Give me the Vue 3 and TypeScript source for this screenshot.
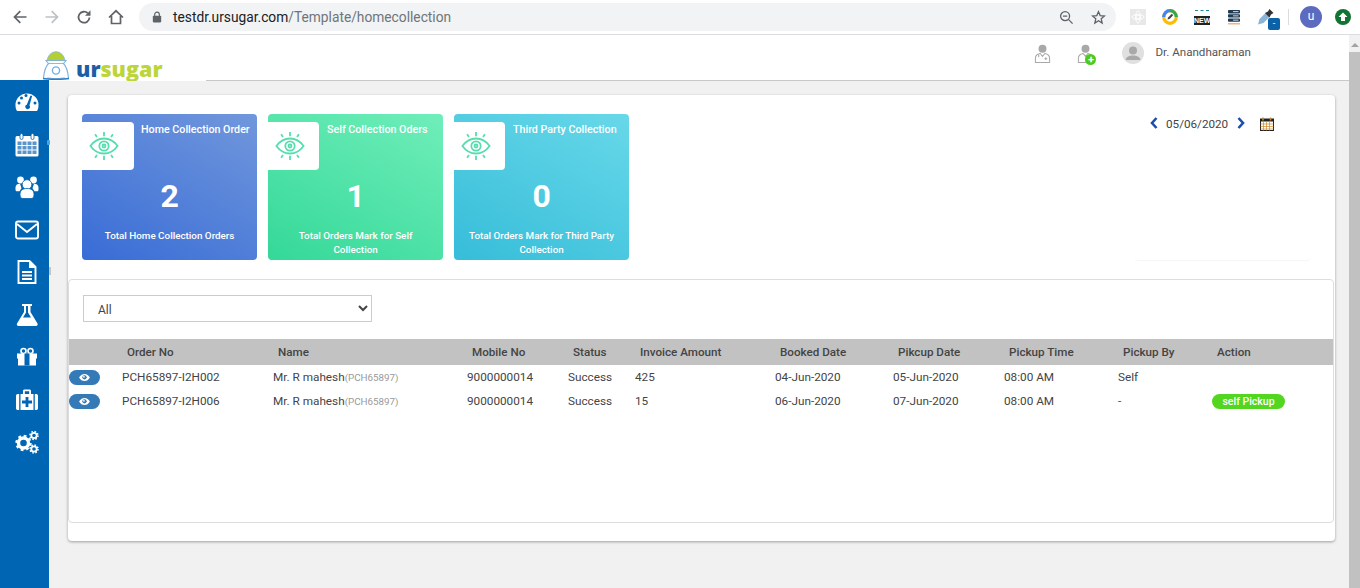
<template>
  <div class="page">
    <!-- browser chrome -->
    <div class="chrome">
      <div class="nav-btns">
        <svg viewBox="0 0 16 16" class="nav"><path d="M14.500 8H3M8.300 2.200 2.500 8l5.800 5.800" fill="none" stroke="#5f6368" stroke-width="1.700" /></svg>
        <svg viewBox="0 0 16 16" class="nav"><path d="M1.500 8H13M7.700 2.200 13.500 8l-5.800 5.800" fill="none" stroke="#bdc1c6" stroke-width="1.700" /></svg>
        <svg viewBox="0 0 16 16" class="nav"><path d="M13.500 8.500A5.500 5.500 0 1 1 11.800 4.200" fill="none" stroke="#5f6368" stroke-width="1.800" /><path d="M14.500 1.200V6.800H9z" fill="#5f6368" /></svg>
        <svg viewBox="0 0 16 16" class="nav"><path d="M1 8.500 8 1.800l7 6.700M3.500 7v7.500h9V7" fill="none" stroke="#5f6368" stroke-width="1.700" /></svg>
      </div>
      <div class="omnibox">
        <svg viewBox="0 0 12 14" class="lock"><rect x="1" y="5.500" width="10" height="8" rx="1" fill="#5f6368" /><path d="M3.200 6V4a2.800 2.800 0 0 1 5.600 0v2" fill="none" stroke="#5f6368" stroke-width="1.400" /></svg>
        <span class="url"><span class="host">testdr.ursugar.com</span>/Template/homecollection</span>
        <svg viewBox="0 0 16 16" class="omni-ico zoom-ico"><circle cx="6.500" cy="6.500" r="4.800" fill="none" stroke="#5f6368" stroke-width="1.400" /><path d="M4.200 6.500h4.600M10 10l4.500 4.500" stroke="#5f6368" stroke-width="1.400" /></svg>
        <svg viewBox="0 0 16 16" class="omni-ico"><path d="M8 1.800 9.800 6l4.600.4-3.500 3 1 4.500L8 11.500l-3.900 2.400 1-4.500-3.500-3L6.200 6z" fill="none" stroke="#5f6368" stroke-width="1.400" /></svg>
      </div>
      <div class="exts">
        <svg viewBox="0 0 16 16" class="ext"><rect width="16" height="16" fill="#e8e8e8" /><g fill="none" stroke="#fff"><circle cx="8" cy="8" r="2" /><ellipse cx="8" cy="8" rx="6" ry="2.400" /><ellipse cx="8" cy="8" rx="2.400" ry="6" /></g></svg>
        <svg viewBox="0 0 16 16" class="ext"><circle cx="8" cy="8" r="6.300" fill="#fff" stroke="#fbbc04" stroke-width="3.200" /><path d="M8 1.700A6.300 6.300 0 0 0 1.700 8" fill="none" stroke="#4285f4" stroke-width="3.200" /><path d="M14.300 8A6.300 6.300 0 0 0 8 1.700" fill="none" stroke="#34a853" stroke-width="3.200" /><path d="m5.500 10.500.6-2L9.800 4.800l1.400 1.400-3.700 3.700z" fill="#444" /></svg>
        <div class="ext new-ext"><span class="new-dash"></span><span class="new-word">NEW</span></div>
        <svg viewBox="0 0 16 16" class="ext"><g fill="#1f3a54"><rect x="2" y="1" width="12" height="3.400" rx=".8" /><rect x="2" y="5.200" width="12" height="3.400" rx=".8" /><rect x="2" y="9.400" width="12" height="3.400" rx=".8" /></g><g fill="#fff"><rect x="7" y="2.300" width="5.500" height=".8" /><rect x="7" y="6.500" width="5.500" height=".8" /><rect x="7" y="10.700" width="5.500" height=".8" /></g><rect x="2" y="14.200" width="12" height="1.200" fill="#f0a060" /></svg>
        <div class="ext dropper">
          <svg viewBox="0 0 16 16" class="ext"><path d="M0 15.500 1.500 10 8 3.500l4 4-6.500 6.500z" fill="#8ab4d8" /><path d="m7 4 3-1.500L11.500 0l4 4L13 5.500 11.500 8.500z" fill="#333" /></svg>
          <span class="dropper-badge">-</span>
        </div>
        <span class="ext-sep"></span>
        <span class="profile">u</span>
        <svg viewBox="0 0 16 16" class="ext update"><circle cx="8" cy="8" r="8" fill="#137333" /><path d="M8 3.500 12.500 8H10v4H6V8H3.500z" fill="#fff" /></svg>
      </div>
    </div>

    <div class="viewport">
      <div class="app-col">
        <header class="header">
          <div class="logo">
            <svg viewBox="0 0 28 29" class="sack">
              <path d="M5 9.500C6 4 10 .8 14 .8s8 3.200 9 8.700z" fill="#b5cf32" stroke="#7fb2dd" stroke-width=".8" />
              <path d="M4 9.500h20l-2.500 3c3 3 4.500 9 5 14.500-2 .8-4 .5-5 0-5 1-10 1-15 0-1 .5-3 .8-5 0 .5-5.500 2-11.500 5-14.500z" fill="#fff" stroke="#7fb2dd" stroke-width="1.100" />
              <path d="M6.500 12.500h15" stroke="#7fb2dd" stroke-width=".9" />
              <circle cx="14" cy="19.500" r="3.600" fill="none" stroke="#6fb0e6" stroke-width="1.400" />
              <path d="M1 27.500c4 1 22 1 26 0" fill="none" stroke="#2f7fc4" stroke-width="1.300" />
            </svg>
            <span class="wordmark"><span class="ur">ur</span><span class="sugar">sugar</span></span>
          </div>
          <div class="user-area">
            <svg viewBox="0 0 18 20" class="doc-ico">
              <circle cx="9" cy="5" r="4.200" fill="#a8a8a8" />
              <path d="M1.500 19.500v-4.500c0-3 2.500-4.500 5-5l2.500 3 2.500-3c2.500.5 5 2 5 5v4.500z" fill="#fff" stroke="#a8a8a8" stroke-width="1.100" />
              <path d="M12.500 14v3M11 15.500h3M5 11v3" stroke="#a8a8a8" stroke-width="1.100" />
            </svg>
            <div class="doc-add">
              <svg viewBox="0 0 18 20" class="doc-ico">
                <circle cx="9" cy="5" r="4.200" fill="#a8a8a8" />
                <path d="M1.500 19.500v-4.500c0-3 2.500-4.500 5-5l2.500 3 2.500-3c2.500.5 5 2 5 5v4.500z" fill="#fff" stroke="#a8a8a8" stroke-width="1.100" />
              </svg>
              <span class="plus-badge">+</span>
            </div>
            <svg viewBox="0 0 22 22" class="avatar">
              <circle cx="11" cy="11" r="11" fill="#e0e0e0" />
              <circle cx="11" cy="8.500" r="4" fill="#a9a9a9" />
              <path d="M3.500 18c1-3.500 4-4.500 7.500-4.500s6.500 1 7.500 4.500z" fill="#a9a9a9" />
            </svg>
            <span class="user-name">Dr. Anandharaman</span>
          </div>
        </header>

        <div class="body">
          <nav class="sidebar">
            <svg viewBox="0 0 24 24" class="side-ico">
              <path d="M.5 15a11.500 11.500 0 1 1 23 0c0 3-.5 4.500-1.500 6H2c-1-1.500-1.500-3-1.500-6z" fill="#fff" />
              <g fill="#0065b3"><circle cx="4" cy="13" r="1.500" /><circle cx="6.500" cy="8" r="1.500" /><circle cx="11" cy="5.500" r="1.500" /><circle cx="20" cy="13" r="1.500" /><path d="m15.500 5.500 1.600.6-2.600 9.400a2.300 2.300 0 1 1-2.700-.8z" /></g>
            </svg>
            <svg viewBox="0 0 24 24" class="side-ico">
              <path d="M2 3h20a1.500 1.500 0 0 1 1.500 1.500V22a1.500 1.500 0 0 1-1.500 1.500H2A1.500 1.500 0 0 1 .5 22V4.500A1.500 1.500 0 0 1 2 3z" fill="#fff" />
              <g fill="#fff" stroke="#0065b3" stroke-width=".8"><rect x="5" y=".5" width="3" height="6" rx="1.500" /><rect x="16" y=".5" width="3" height="6" rx="1.500" /></g>
              <g fill="#5a94c9"><rect x="2.500" y="8.500" width="4" height="3.500" /><rect x="7.500" y="8.500" width="4" height="3.500" /><rect x="12.500" y="8.500" width="4" height="3.500" /><rect x="17.500" y="8.500" width="4" height="3.500" /><rect x="2.500" y="13" width="4" height="3.500" /><rect x="7.500" y="13" width="4" height="3.500" /><rect x="12.500" y="13" width="4" height="3.500" /><rect x="17.500" y="13" width="4" height="3.500" /><rect x="2.500" y="17.500" width="4" height="3.500" /><rect x="7.500" y="17.500" width="4" height="3.500" /><rect x="12.500" y="17.500" width="4" height="3.500" /><rect x="17.500" y="17.500" width="4" height="3.500" /></g>
            </svg>
            <svg viewBox="0 0 24 24" class="side-ico">
              <g fill="#fff">
                <circle cx="5.500" cy="5" r="3.400" />
                <circle cx="18.500" cy="5" r="3.400" />
                <path d="M.5 12.500C.5 10 2.500 8.500 5 8.700l1.500 4.500-2 3H2c-1 0-1.500-.7-1.500-1.500zM23.500 12.500c0-2.500-2-4-4.500-3.800l-1.500 4.500 2 3H22c1 0 1.500-.7 1.500-1.500z" />
                <circle cx="12" cy="9.500" r="4.800" stroke="#0065b3" stroke-width=".8" />
                <path d="M5 19.500c0-4.500 3-6 7-6s7 1.500 7 6c0 2.500-1 4-3 4H8c-2 0-3-1.500-3-4z" stroke="#0065b3" stroke-width=".8" />
              </g>
            </svg>
            <svg viewBox="0 0 24 24" class="side-ico">
              <rect x="1" y="3.500" width="22" height="17" rx="2" fill="none" stroke="#fff" stroke-width="1.900" />
              <path d="m2 6 10 8 10-8" fill="none" stroke="#fff" stroke-width="1.900" />
            </svg>
            <svg viewBox="0 0 24 24" class="side-ico">
              <path d="M3.500 1h11l6 6v16h-17z" fill="none" stroke="#fff" stroke-width="1.900" />
              <path d="M14 1v7h7z" fill="#fff" />
              <path d="M7 12h10M7 15.500h10M7 19h10" stroke="#fff" stroke-width="1.800" />
            </svg>
            <svg viewBox="0 0 24 24" class="side-ico">
              <path d="M7 1h10v2h-1.500v6l7 11.500c.6 1.300-.2 2.500-1.500 2.500H3.500c-1.300 0-2.100-1.200-1.500-2.500L9 9V3H7z" fill="#fff" />
              <path d="M11 3v6.500L8 14.500h8l-3-5V3z" fill="#0065b3" />
            </svg>
            <svg viewBox="0 0 24 24" class="side-ico">
              <g fill="none" stroke="#fff" stroke-width="1.600"><circle cx="8.500" cy="6" r="2.500" /><circle cx="15.500" cy="6" r="2.500" /></g>
              <path d="M2 8.500h20v5h-1v7H3v-7H2z" fill="#fff" />
              <rect x="9.500" y="8.500" width="5" height="12" fill="#0065b3" />
            </svg>
            <svg viewBox="0 0 24 24" class="side-ico">
              <path d="M8 6V3c0-1 .7-1.500 1.500-1.500h5c.8 0 1.500.5 1.500 1.500v3h-1.800V3.300H9.800V6z" fill="#fff" />
              <path d="M2.500 6h1.700v16H2.500C1.500 22 1 21 1 20V8c0-1 .5-2 1.500-2zM21.500 6h-1.700v16h1.700c1 0 1.500-1 1.500-2V8c0-1-.5-2-1.500-2z" fill="#fff" />
              <rect x="5.500" y="6" width="13" height="16" fill="#fff" />
              <path d="M12 9v10M7 14h10" stroke="#0065b3" stroke-width="2.800" />
            </svg>
            <svg viewBox="0 0 24 24" class="side-ico">
              <g fill="none" stroke="#fff">
                <circle cx="8.500" cy="13" r="5" stroke-width="3.400" />
                <circle cx="8.500" cy="13" r="7" stroke-width="2.400" stroke-dasharray="2.700 2.800" />
                <circle cx="19" cy="5.500" r="2.700" stroke-width="1.800" />
                <circle cx="19" cy="5.500" r="4" stroke-width="1.500" stroke-dasharray="1.600 1.540" />
                <circle cx="19" cy="19" r="2.700" stroke-width="1.800" />
                <circle cx="19" cy="19" r="4" stroke-width="1.500" stroke-dasharray="1.600 1.540" />
              </g>
            </svg>
            <span class="side-dot"></span>
            <span class="side-peek"></span>
          </nav>

          <main class="main">
            <section class="panel">
              <div class="top-row">
                <div class="cards">
                  <div v-for="card in cards" :key="card.title" class="card" :class="card.tone">
                    <div class="card-head">
                      <div class="card-icon">
                        <svg viewBox="0 0 32 32" class="eye">
                          <g fill="none" stroke="#55deac" stroke-width="1.900">
                            <path d="M1.500 16c4-5.500 8.500-8 14.500-8s10.500 2.500 14.500 8c-4 5.500-8.500 8-14.500 8S5.500 21.500 1.500 16z" />
                            <circle cx="16" cy="16" r="5" />
                            <circle cx="16" cy="16" r="1.600" />
                            <path d="M16 1v4.500M16 26.500V31M6.500 3.500l2 3M25.500 3.500l-2 3M6.500 28.500l2-3M25.500 28.500l-2-3" />
                          </g>
                        </svg>
                      </div>
                      <span class="card-title">{{ card.title }}</span>
                    </div>
                    <div class="card-count">{{ card.count }}</div>
                    <div class="card-note">{{ card.note }}</div>
                  </div>
                </div>
                <div class="date-box">
                  <svg viewBox="0 0 8 12" class="chev"><path d="M6.500 1 2 6l4.500 5" fill="none" stroke="#1c4fa8" stroke-width="2.600" /></svg>
                  <span class="date-text">05/06/2020</span>
                  <svg viewBox="0 0 8 12" class="chev"><path d="M1.500 1 6 6l-4.500 5" fill="none" stroke="#1c4fa8" stroke-width="2.600" /></svg>
                  <svg viewBox="0 0 14 14" class="cal">
                    <rect x=".5" y="2" width="13" height="11.500" fill="#fff" stroke="#222" />
                    <rect x=".5" y="2" width="13" height="2.500" fill="#222" />
                    <path d="M3 .5v3M10.500 .5v3" stroke="#c98a2d" stroke-width="1.500" />
                    <path d="M.5 7h13M.5 9.500h13M.5 12h13M3.500 4.500v9M6.500 4.500v9M9.500 4.500v9" stroke="#c98a2d" stroke-width=".7" />
                  </svg>
                </div>
              </div>

              <div class="orders">
                <div class="filter">
                  <select class="status-select">
                    <option>All</option>
                  </select>
                </div>
                <table class="orders-table">
                  <colgroup>
                    <col v-for="col in columns" :key="col.label" :style="{ width: col.width + 'px' }" />
                  </colgroup>
                  <thead>
                    <tr>
                      <th v-for="col in columns" :key="col.label">{{ col.label }}</th>
                    </tr>
                  </thead>
                  <tbody>
                    <tr v-for="row in rows" :key="row.orderNo">
                      <td>
                        <span class="view-btn">
                          <svg viewBox="0 0 14 10" class="view-eye">
                            <path d="M1 5c1.500-2.500 3.500-4 6-4s4.500 1.500 6 4c-1.500 2.500-3.500 4-6 4S2.500 7.500 1 5z" fill="#fff" />
                            <circle cx="7" cy="4.800" r="2.400" fill="#337ab7" />
                            <circle cx="6.400" cy="4.200" r="1" fill="#fff" />
                          </svg>
                        </span>
                      </td>
                      <td>{{ row.orderNo }}</td>
                      <td>{{ row.name }}<span class="ref">({{ row.ref }})</span></td>
                      <td>{{ row.mobile }}</td>
                      <td>{{ row.status }}</td>
                      <td>{{ row.amount }}</td>
                      <td>{{ row.booked }}</td>
                      <td>{{ row.pickup }}</td>
                      <td>{{ row.time }}</td>
                      <td>{{ row.by }}</td>
                      <td><span v-if="row.action" class="pickup-pill">{{ row.action }}</span></td>
                    </tr>
                  </tbody>
                </table>
              </div>
            </section>
          </main>
        </div>
      </div>

      <div class="scrollbar">
        <span class="scroll-up"></span>
        <span class="scroll-thumb"></span>
      </div>
    </div>
  </div>
</template>

<script setup lang="ts">
interface Card {
  title: string
  count: number
  note: string
  tone: string
}

interface OrderRow {
  orderNo: string
  name: string
  ref: string
  mobile: string
  status: string
  amount: string
  booked: string
  pickup: string
  time: string
  by: string
  action?: string
}

const cards: Card[] = [
  { title: 'Home Collection Order', count: 2, note: 'Total Home Collection Orders', tone: 'blue' },
  { title: 'Self Collection Oders', count: 1, note: 'Total Orders Mark for Self Collection', tone: 'green' },
  { title: 'Third Party Collection', count: 0, note: 'Total Orders Mark for Third Party Collection', tone: 'cyan' }
]

const columns = [
  { label: '', width: 53 },
  { label: 'Order No', width: 151 },
  { label: 'Name', width: 194 },
  { label: 'Mobile No', width: 101 },
  { label: 'Status', width: 67 },
  { label: 'Invoice Amount', width: 140 },
  { label: 'Booked Date', width: 118 },
  { label: 'Pikcup Date', width: 111 },
  { label: 'Pickup Time', width: 114 },
  { label: 'Pickup By', width: 94 },
  { label: 'Action', width: 121 }
]

const rows: OrderRow[] = [
  {
    orderNo: 'PCH65897-I2H002',
    name: 'Mr. R mahesh',
    ref: 'PCH65897',
    mobile: '9000000014',
    status: 'Success',
    amount: '425',
    booked: '04-Jun-2020',
    pickup: '05-Jun-2020',
    time: '08:00 AM',
    by: 'Self'
  },
  {
    orderNo: 'PCH65897-I2H006',
    name: 'Mr. R mahesh',
    ref: 'PCH65897',
    mobile: '9000000014',
    status: 'Success',
    amount: '15',
    booked: '06-Jun-2020',
    pickup: '07-Jun-2020',
    time: '08:00 AM',
    by: '-',
    action: 'self Pickup'
  }
]
</script>

<style>
html,
body {
  margin: 0;
  background: #f1f1f1;
  overflow: hidden;
}
</style>

<style scoped>
.page {
  width: 1360px;
  height: 588px;
  display: flex;
  flex-direction: column;
  font-family: Roboto, "Liberation Sans", sans-serif;
  color: #444;
  overflow: hidden;
}

/* browser bar */
.chrome {
  height: 34px;
  flex: none;
  display: flex;
  align-items: center;
  background: #fff;
  border-bottom: 1px solid #dadce0;
}

.nav-btns {
  display: flex;
  gap: 16px;
  padding-left: 12px;
  width: 139px;
  box-sizing: border-box;
}

.nav {
  width: 16px;
  height: 16px;
}

.omnibox {
  width: 977px;
  height: 28px;
  display: flex;
  align-items: center;
  background: #f1f3f4;
  border-radius: 14px;
  box-sizing: border-box;
  padding: 0 10px 0 13px;
}

.lock {
  width: 10px;
  height: 12px;
}

.url {
  margin-left: 11px;
  font-size: 13.750px;
  color: #70757a;
  flex: 1;
}

.host {
  color: #202124;
}

.omni-ico {
  width: 15px;
  height: 15px;
}

.zoom-ico {
  margin-right: 17px;
}

.exts {
  display: flex;
  align-items: center;
  flex: 1;
  padding-left: 14px;
}

.ext {
  width: 16px;
  height: 16px;
  flex: none;
  margin-right: 16px;
}

.new-ext {
  display: flex;
  flex-direction: column;
  align-items: center;
  justify-content: flex-end;
  height: 16px;
}

.new-dash {
  width: 14px;
  height: 6px;
  border-top: 1px dashed #1a8a9a;
  box-sizing: border-box;
}

.new-word {
  background: #222;
  color: #fff;
  font-size: 7px;
  font-weight: 700;
  line-height: 9px;
  width: 16px;
  text-align: center;
  font-family: "Liberation Sans", sans-serif;
}

.dropper {
  position: relative;
  margin-right: 14px;
}

.dropper .ext {
  margin: 0;
  display: block;
}

.dropper-badge {
  position: absolute;
  left: 10px;
  top: 9px;
  width: 12px;
  height: 12px;
  background: #0b62a8;
  border-radius: 2px;
  color: #fff;
  font-size: 9px;
  line-height: 11px;
  text-align: center;
}

.ext-sep {
  width: 1px;
  height: 16px;
  background: #dadce0;
  margin-right: 11px;
}

.profile {
  width: 22px;
  height: 22px;
  border-radius: 50%;
  background: #5c6bc0;
  color: #fff;
  font-size: 12px;
  line-height: 21px;
  text-align: center;
  flex: none;
  margin-right: 13px;
}

.update {
  margin-right: 0;
}

.viewport {
  flex: 1;
  display: flex;
  min-height: 0;
}

.app-col {
  flex: 1;
  min-width: 0;
  display: flex;
  flex-direction: column;
}

/* site header */
.header {
  height: 45px;
  flex: none;
  display: flex;
  justify-content: space-between;
  background: #fff;
  border-bottom: 1px solid #c8c8c8;
}

.logo {
  width: 206px;
  height: 46px;
  box-sizing: border-box;
  background: #fff;
  display: flex;
  align-items: flex-start;
  padding: 16px 0 0 42px;
}

.sack {
  width: 28px;
  height: 29px;
  flex: none;
}

.wordmark {
  font-family: "Open Sans", sans-serif;
  font-weight: 800;
  font-size: 21.500px;
  line-height: 24px;
  margin-left: 6px;
  margin-top: 6px;
}

.ur {
  color: #1a5fa8;
}

.sugar {
  color: #bcd63a;
}

.user-area {
  display: flex;
  align-items: center;
  padding-right: 98px;
  height: 36px;
}

.doc-ico {
  width: 17px;
  height: 19px;
  display: block;
}

.doc-add {
  position: relative;
  margin-left: 26px;
  margin-right: 28px;
}

.plus-badge {
  position: absolute;
  left: 8px;
  top: 10px;
  width: 11px;
  height: 11px;
  border-radius: 50%;
  background: #4fc91f;
  color: #fff;
  font-size: 11px;
  font-weight: 700;
  line-height: 11px;
  text-align: center;
}

.avatar {
  width: 22px;
  height: 22px;
  flex: none;
}

.user-name {
  font-size: 11.600px;
  margin-left: 11px;
  margin-bottom: 2px;
  color: #555;
}

.body {
  flex: 1;
  display: flex;
  min-height: 0;
}

/* left rail */
.sidebar {
  width: 49px;
  flex: none;
  margin-top: -1px;
  background: #0065b3;
  display: flex;
  flex-direction: column;
  align-items: center;
  gap: 18.500px;
  padding: 10px 0 0 4px;
  box-sizing: border-box;
  position: relative;
}

.side-ico {
  width: 24px;
  height: 24px;
  flex: none;
}

.side-dot {
  position: absolute;
  left: 47px;
  top: 60px;
  width: 3px;
  height: 5px;
  background: #3fa9e8;
  border-radius: 1px;
}

.side-peek {
  position: absolute;
  left: 49px;
  top: 187px;
  width: 1.500px;
  height: 8px;
  background: #c4c4c4;
}

.main {
  flex: 1;
  min-width: 0;
  padding: 14px 14px 0 19px;
  background: #f1f1f1;
}

.panel {
  height: 446px;
  box-sizing: border-box;
  background: #fff;
  border-radius: 4px;
  box-shadow: 0 1px 3px rgba(0, 0, 0, 0.35);
  padding-top: 19px;
}

.top-row {
  display: flex;
  justify-content: space-between;
  padding: 0 25px 0 14px;
  height: 146px;
}

.cards {
  display: flex;
  gap: 10.800px;
}

.card {
  width: 175.200px;
  height: 146px;
  box-sizing: border-box;
  border-radius: 4px;
  color: #fff;
  display: flex;
  flex-direction: column;
  align-items: center;
  padding-top: 8px;
}

.card.blue {
  background: linear-gradient(30deg, #386cd6, #7197dc);
}

.card.green {
  background: linear-gradient(30deg, #34d898, #70eeba);
}

.card.cyan {
  background: linear-gradient(30deg, #36bdd9, #68d8e9);
}

.card-head {
  width: 100%;
  display: flex;
  align-items: flex-start;
}

.card-icon {
  width: 51.500px;
  height: 48px;
  background: #fff;
  border-radius: 0 4px 4px 0;
  display: flex;
  align-items: center;
  padding-left: 7px;
  box-sizing: border-box;
  flex: none;
}

.eye {
  width: 30px;
  height: 30px;
}

.card-title {
  font-size: 10.700px;
  font-weight: 500;
  line-height: 14px;
  margin: 1px 0 0 7.500px;
}

.card-count {
  font-size: 32px;
  font-weight: 700;
  line-height: 36px;
  margin-top: 8px;
}

.card-note {
  font-size: 9.850px;
  font-weight: 500;
  line-height: 14px;
  text-align: center;
  margin-top: 15px;
  padding: 0 10px;
}

.date-box {
  width: 175px;
  height: 146px;
  box-sizing: border-box;
  box-shadow: 0 1px 1px rgba(0, 0, 0, 0.04);
  border-radius: 4px;
  display: flex;
  align-items: flex-start;
  padding: 3px 0 0 15px;
}

.chev {
  width: 8px;
  height: 12px;
  flex: none;
}

.date-text {
  font-size: 11.700px;
  line-height: 14px;
  margin: 0 9px 0 8px;
  color: #444;
}

.cal {
  width: 14px;
  height: 14px;
  margin: 0 0 0 15px;
  flex: none;
}

/* orders table */
.orders {
  margin: 19px 1px 0 0;
  height: 244px;
  box-sizing: border-box;
  border: 1px solid #ddd;
  border-radius: 4px;
}

.filter {
  padding: 15px 0 17px 14px;
}

.status-select {
  display: block;
  width: 289px;
  height: 27px;
  border: 1px solid #ccc;
  background: #fff;
  padding: 2px 0 0 10px;
  font-family: Roboto, "Liberation Sans", sans-serif;
  font-size: 12px;
  color: #444;
  border-radius: 0;
  outline: none;
}

.orders-table {
  width: 1264px;
  table-layout: fixed;
  border-collapse: collapse;
  font-size: 11.750px;
}

.orders-table th {
  height: 26px;
  padding: 0 0 0 5px;
  background: #c2c2c2;
  text-align: left;
  font-size: 11.650px;
  font-weight: 500;
  color: #444;
}

.orders-table td {
  height: 24px;
  padding: 0;
  color: #444;
  white-space: nowrap;
}

.view-btn {
  display: flex;
  align-items: center;
  justify-content: center;
  width: 31px;
  height: 15px;
  background: #337ab7;
  border-radius: 8px;
}

.view-eye {
  width: 13px;
  height: 9px;
}

.ref {
  font-size: 9.800px;
  color: #999;
}

.pickup-pill {
  display: inline-block;
  width: 73px;
  height: 15px;
  background: #52d61f;
  border-radius: 8px;
  color: #fff;
  font-size: 10.500px;
  font-weight: 500;
  line-height: 15px;
  text-align: center;
  vertical-align: middle;
}

/* page scrollbar */
.scrollbar {
  width: 11px;
  flex: none;
  background: #f1f1f1;
  display: flex;
  flex-direction: column;
  align-items: center;
}

.scroll-up {
  width: 0;
  height: 0;
  margin-top: 8px;
  border-left: 4px solid transparent;
  border-right: 4px solid transparent;
  border-bottom: 4px solid #a3a3a3;
}

.scroll-thumb {
  width: 100%;
  flex: 1;
  margin-top: 5px;
  background: #c1c1c1;
}
</style>
